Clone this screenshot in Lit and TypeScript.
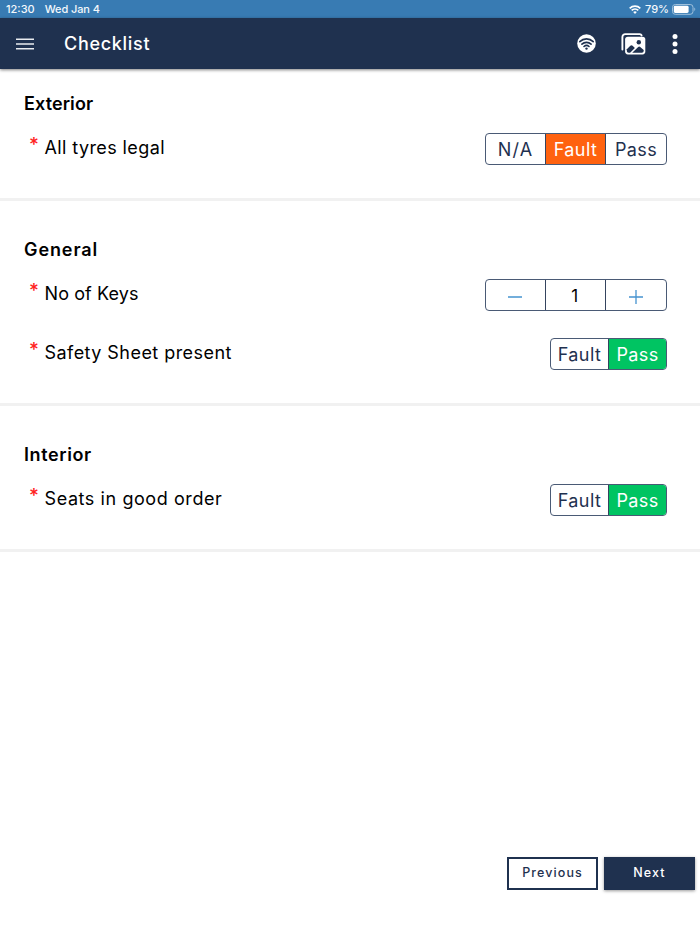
import { LitElement, html, css, svg } from "lit";
import { customElement, property } from "lit/decorators.js";
import { classMap } from "lit/directives/class-map.js";

type Tone = "fault" | "pass";
interface Item {
  label: string;
  spacing: number;
  kind: "choice" | "stepper";
  options?: string[];
  selected?: string;
  tone?: Tone;
  value?: number;
}
interface Group {
  title: string;
  spacing: number;
  items: Item[];
}

const groups: Group[] = [
  {
    title: "Exterior",
    spacing: 0.1,
    items: [
      { label: "All tyres legal", spacing: 0.4, kind: "choice", options: ["N/A", "Fault", "Pass"], selected: "Fault", tone: "fault" },
    ],
  },
  {
    title: "General",
    spacing: 0.9,
    items: [
      { label: "No of Keys", spacing: 0.1, kind: "stepper", value: 1 },
      { label: "Safety Sheet present", spacing: 0.45, kind: "choice", options: ["Fault", "Pass"], selected: "Pass", tone: "pass" },
    ],
  },
  {
    title: "Interior",
    spacing: 0.6,
    items: [
      { label: "Seats in good order", spacing: 0.58, kind: "choice", options: ["Fault", "Pass"], selected: "Pass", tone: "pass" },
    ],
  },
];

@customElement("status-bar")
export class StatusBar extends LitElement {
  static styles = css`
    :host {
      display: flex;
      align-items: center;
      height: 18px;
      box-sizing: border-box;
      padding: 0 4px 0 6px;
      background: #387bb3;
      color: #f3f8fc;
      font: 500 11px/18px Inter, sans-serif;
    }
    .date { margin-left: 10px; letter-spacing: -0.1px; }
    .wifi { margin-left: auto; }
    .level { margin: 0 3px 0 4px; }
    svg { display: block; }
  `;
  render() {
    return html`
      <span>12:30</span><span class="date">Wed Jan 4</span>
      <svg class="wifi" width="12" height="9" viewBox="0 0 12 9" fill="none" stroke="#fff" stroke-width="1.7">
        <path d="M.7 3.3a7.6 7.6 0 0 1 10.6 0M2.7 5.4a4.7 4.7 0 0 1 6.6 0" />
        <path d="M6 9 4.2 7.1a2.6 2.6 0 0 1 3.6 0z" fill="#fff" stroke="none" />
      </svg>
      <span class="level">79%</span>
      <svg width="24" height="11" viewBox="0 0 24 11">
        <rect x=".5" y=".5" width="20.5" height="9.8" rx="2.8" fill="none" stroke="#9fc1dc" />
        <rect x="1.8" y="1.8" width="14.8" height="7.2" rx="1.4" fill="#fff" />
        <path d="M22.3 3.6c1.3.5 1.3 2.9 0 3.4z" fill="#9fc1dc" />
      </svg>
    `;
  }
}

@customElement("title-bar")
export class TitleBar extends LitElement {
  static styles = css`
    :host {
      display: flex;
      align-items: center;
      height: 51px;
      padding: 0 16px 0 16px;
      box-sizing: border-box;
      background: #1f314f;
      color: #fff;
      box-shadow: 0 1px 3px rgba(0, 0, 0, 0.5);
    }
    h1 {
      flex: 1;
      margin: 1px 0 0 30px;
      font: 500 18px/24px Inter, sans-serif;
      letter-spacing: 0.7px;
    }
    svg { display: block; }
    .gallery { margin: 0 20px 0 25px; }
  `;
  render() {
    return html`
      <svg width="18" height="12" viewBox="0 0 18 12" stroke="#e9ecf0" stroke-width="1.6">
        <path d="M0 1.3h18M0 6h18M0 10.7h18" />
      </svg>
      <h1>Checklist</h1>
      <svg width="19" height="19" viewBox="0 0 19 19">
        <circle cx="9.5" cy="9.5" r="9.3" fill="#fff" />
        <g fill="none" stroke="#1f314f" stroke-width="1.6" stroke-linecap="round">
          <path d="M2.8 7.6c3.8-3.7 9.6-3.7 13.4 0M4.9 10.2c2.6-2.5 6.6-2.5 9.2 0M7 12.5c1.4-1.3 3.6-1.3 5 0" />
        </g>
        <circle cx="9.5" cy="14.6" r="1.2" fill="#1f314f" />
      </svg>
      <svg class="gallery" width="25" height="22" viewBox="0 0 25 22">
        <path d="M1.4 16.6V4a2.9 2.9 0 0 1 2.9-2.9h14.4a2 2 0 0 1 1.9 1.3" fill="none" stroke="#fff" stroke-width="1.9" stroke-linecap="round" />
        <rect x="4.1" y="3.8" width="20.2" height="17.6" rx="2.8" fill="#fff" />
        <circle cx="17.8" cy="9.2" r="2.2" fill="#1f314f" />
        <path d="M5.8 16.3 9.3 12.7a1.7 1.7 0 0 1 2.3 0l2.3 2.2-4.8 4.8H7.6a1.8 1.8 0 0 1-1.8-1.8z" fill="#1f314f" />
        <path d="m11.2 19.7 6-5.7a1.5 1.5 0 0 1 2 0l3.5 3.1v.9a1.8 1.8 0 0 1-1.8 1.7z" fill="#1f314f" />
      </svg>
      <svg width="18" height="20" viewBox="0 0 18 20" fill="#fff">
        <circle cx="9" cy="2.6" r="2.5" /><circle cx="9" cy="10" r="2.5" /><circle cx="9" cy="17.4" r="2.5" />
      </svg>
    `;
  }
}

@customElement("segmented-control")
export class SegmentedControl extends LitElement {
  @property({ attribute: false }) item!: Item;
  static styles = css`
    :host { display: block; }
    .box {
      display: grid;
      grid-template-columns: 59px 60px 61px;
      height: 32px;
      box-sizing: border-box;
      border: 1px solid #4a5a75;
      border-radius: 4px;
      overflow: hidden;
      color: #1f314f;
      font: 400 18px/30px Inter, sans-serif;
      letter-spacing: 0.4px;
      text-align: center;
    }
    .pair { grid-template-columns: 57px 58px; }
    .cell {
      display: flex;
      align-items: center;
      justify-content: center;
      height: 30px;
      box-sizing: border-box;
    }
    .text { padding-top: 2px; line-height: 28px; }
    .cell + .cell { border-left: 1px solid #35445f; }
    .wide { letter-spacing: 1.2px; }
    .fault { background: #ff620f; color: #fff; }
    .pass { background: #00c462; color: #fff; }
    .value { color: #000; font-size: 17px; padding: 1px 1px 0 0; }
    .sign { padding: 3px 1px 0 0; }
    svg { display: block; }
  `;
  private sign(d: string) {
    return html`<svg width="14" height="14" viewBox="0 0 14 14" stroke="#4593cf" stroke-width="1.3">${svg`<path d=${d} />`}</svg>`;
  }
  render() {
    const { kind, options = [], selected, tone, value } = this.item;
    if (kind === "stepper") {
      return html`<div class="box">
        <span class="cell sign">${this.sign("M0 7h14")}</span>
        <span class="cell value">${value}</span>
        <span class="cell sign">${this.sign("M0 7h14M7 0v14")}</span>
      </div>`;
    }
    return html`<div class=${classMap({ box: true, pair: options.length === 2 })}>
      ${options.map((o) => html`<span class=${classMap({ cell: true, wide: o === "N/A", [tone!]: o === selected })}><span class="text">${o}</span></span>`)}
    </div>`;
  }
}

@customElement("app-root")
export class AppRoot extends LitElement {
  static styles = css`
    :host {
      display: flex;
      flex-direction: column;
      height: 934px;
      box-sizing: border-box;
      background: #fff;
      color: #000;
      font-family: Inter, sans-serif;
    }
    .section {
      padding: 37px 33px 33px 24px;
      border-bottom: 3px solid #f1f1f1;
    }
    .section:first-child { padding-top: 23px; }
    h2 {
      margin: 0 0 17px;
      font: 600 18px/24px Inter, sans-serif;
    }
    .row {
      display: flex;
      justify-content: space-between;
      height: 32px;
    }
    .row + .row { margin-top: 27px; }
    .label {
      display: flex;
      padding-left: 5px;
      font-size: 18px;
      line-height: 29px;
    }
    .star {
      width: 15.5px;
      color: #f22;
      font-size: 19px;
      font-weight: 500;
      line-height: 24px;
    }
    .actions {
      display: flex;
      justify-content: flex-end;
      gap: 6px;
      margin-top: auto;
      padding: 0 5px 44px;
    }
    .button {
      width: 91px;
      height: 33px;
      box-sizing: border-box;
      border: 2px solid #1f314f;
      background: #fff;
      color: #1f314f;
      font: 500 12.5px/28px Inter, sans-serif;
      letter-spacing: 1.1px;
      text-align: center;
      padding: 0 0 2px;
    }
    .primary {
      background: #1f314f;
      color: #fff;
      box-shadow: 0 1px 3px rgba(0, 0, 0, 0.4);
    }
  `;
  render() {
    return html`
      <status-bar></status-bar>
      <title-bar></title-bar>
      <main>
        ${groups.map(
          (g) => html`<section class="section">
            <h2 style="letter-spacing:${g.spacing}px">${g.title}</h2>
            ${g.items.map(
              (i) => html`<div class="row">
                <div class="label"><span class="star">*</span><span style="letter-spacing:${i.spacing}px">${i.label}</span></div>
                <segmented-control .item=${i}></segmented-control>
              </div>`
            )}
          </section>`
        )}
      </main>
      <div class="actions">
        <button class="button">Previous</button>
        <button class="button primary">Next</button>
      </div>
    `;
  }
}
